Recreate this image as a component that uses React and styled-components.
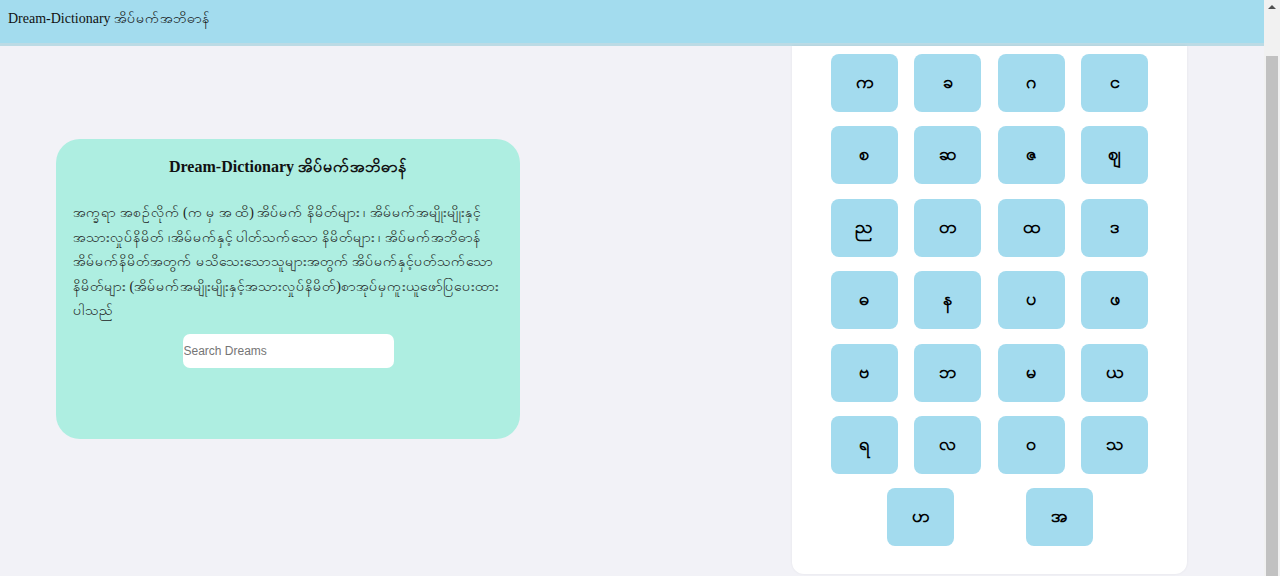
import React, { useState } from "react";
import styled, { createGlobalStyle } from "styled-components";

const Global = createGlobalStyle`
  html, body { margin:0; padding:0; height:100%; overflow:hidden; }
  body { background:#f2f2f7; font-family:"Liberation Serif", serif; color:#111; }
`;

export const Shell = styled.div`
  display:flex;
  width:100vw; height:100vh;
  overflow:hidden;
`;
export const Page = styled.div`
  flex:1;
  display:flex; flex-direction:column;
  min-width:0;
`;
export const Header = styled.header`
  height:46px;
  flex-shrink:0;
  box-sizing:border-box;
  background:#a3dcee;
  border-bottom:3px solid #bcdbe5;
  padding:0 8px 4px;
  display:flex; align-items:center;
  font-size:14px;
`;
export const Content = styled.main`
  flex:1;
  display:flex; align-items:flex-start;
  padding-left:56px;
  gap:272px;
  min-height:0;
`;
export const Card = styled.section`
  width:464px; height:300px;
  margin-top:93px;
  box-sizing:border-box;
  padding:14px 17px 0;
  background:#aeeee1;
  border-radius:24px;
  display:flex; flex-direction:column; align-items:center;
`;
export const Title = styled.h2`
  margin:0;
  font-size:16px;
  font-weight:bold;
  line-height:28px;
`;
export const Text = styled.p`
  margin:20px 0 0;
  font-size:14px;
  line-height:24.5px;
  color:#1c1c1c;
  align-self:stretch;
`;
export const Search = styled.input`
  margin-top:10px;
  width:211px; height:34px;
  box-sizing:border-box;
  border:none; outline:none;
  border-radius:7px;
  background:#fff;
  padding:0 1px;
  font-family:"Liberation Sans", Arial, sans-serif;
  font-size:12px;
  &::placeholder { color:#757575; }
`;
export const Panel = styled.aside`
  width:395px;
  height:528px;
  box-sizing:border-box;
  padding-top:8px;
  background:#fff;
  border-radius:0 0 12px 12px;
  box-shadow:0 0 3px rgba(0,0,0,.06);
  display:flex; flex-direction:column; align-items:center;
  gap:14.4px;
`;
export const Row = styled.div`
  width:350px;
  display:flex; justify-content:space-evenly;
`;
export const Letter = styled.button`
  width:67px; height:58px;
  border:none;
  border-radius:8px;
  background:#a3dbee;
  color:#000;
  font-size:18px;
  font-weight:bold;
  font-family:"Noto Sans", sans-serif;
  cursor:pointer;
  padding:0;
`;
export const Scrollbar = styled.div`
  width:16px; flex-shrink:0;
  background:#f1f1f1;
  display:flex; flex-direction:column; align-items:center;
`;
export const Arrow = styled.div`
  height:56px;
  width:100%;
  display:flex; justify-content:center;
  padding-top:5px;
  box-sizing:border-box;
  &::before {
    content:"";
    width:0; height:0;
    border-left:4px solid transparent;
    border-right:4px solid transparent;
    border-bottom:4px solid #505050;
  }
`;
export const Thumb = styled.div`
  flex:1;
  width:12px;
  background:#c1c1c1;
`;

const rows = [
  ["က", "ခ", "ဂ", "င"],
  ["စ", "ဆ", "ဇ", "ဈ"],
  ["ည", "တ", "ထ", "ဒ"],
  ["ဓ", "န", "ပ", "ဖ"],
  ["ဗ", "ဘ", "မ", "ယ"],
  ["ရ", "လ", "ဝ", "သ"],
  ["ဟ", "အ"],
];

export default function App() {
  const [query, setQuery] = useState("");

  return (
    <Shell>
      <Global />
      <Page>
        <Header>Dream-Dictionary အိပ်မက်အဘိဓာန်</Header>
        <Content>
          <Card>
            <Title>Dream-Dictionary အိပ်မက်အဘိဓာန်</Title>
            <Text>
              အက္ခရာ အစဉ်လိုက် (က မှ အ ထိ) အိပ်မက် နိမိတ်များ ၊ အိမ်မက်အမျိုးမျိုးနှင့်
              အသားလှုပ်နိမိတ် ၊အိမ်မက်နှင့် ပါတ်သက်သော နိမိတ်များ ၊ အိပ်မက်အဘိဓာန်
              အိမ်မက်နိမိတ်အတွက် မသိသေးသောသူများအတွက် အိပ်မက်နှင့်ပတ်သက်သော
              နိမိတ်များ (အိမ်မက်အမျိုးမျိုးနှင့်အသားလှုပ်နိမိတ်)စာအုပ်မှကူးယူဖော်ပြပေးထား
              ပါသည်
            </Text>
            <Search
              placeholder="Search Dreams"
              value={query}
              onChange={(e) => setQuery(e.target.value)}
            />
          </Card>
          <Panel>
            {rows.map((r, i) => (
              <Row key={i}>
                {r.map((l) => <Letter key={l}>{l}</Letter>)}
              </Row>
            ))}
          </Panel>
        </Content>
      </Page>
      <Scrollbar>
        <Arrow />
        <Thumb />
      </Scrollbar>
    </Shell>
  );
}
